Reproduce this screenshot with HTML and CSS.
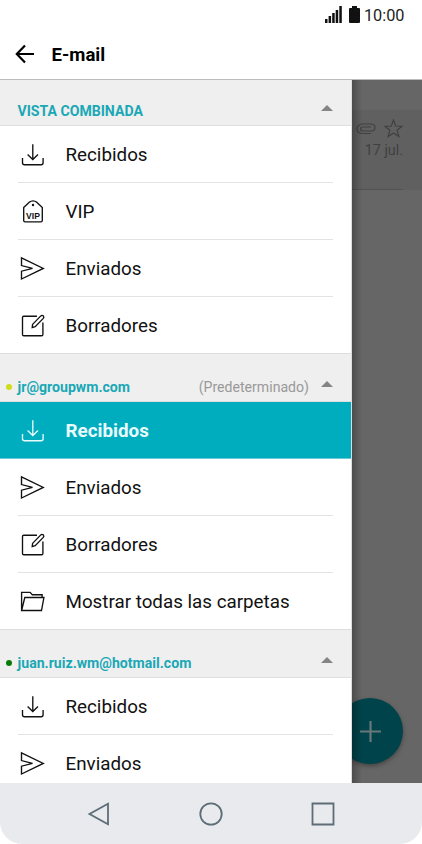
FILE: index.html
```html
<!DOCTYPE html>
<html lang="es">
<head>
<meta charset="utf-8">
<title>E-mail</title>
<link rel="stylesheet" href="styles.css">
</head>
<body>
<svg class="defs" width="0" height="0">
  <symbol id="inbox" viewBox="0 0 26 26"><path d="M2.500 17v4.700q0 2 2 2h16.600q2 0 2-2V17M12.800 3.200v15.300M7.600 13.500l5.200 5 5.200-5"/></symbol>
  <symbol id="send" viewBox="0 0 26 26"><path d="M1.500 2.900L23.300 13.400 1.500 24V16.200l11-2.800-11-2.800z"/></symbol>
  <symbol id="draft" viewBox="0 0 26 26"><path d="M17 4.200H3.700q-1.200 0-1.200 1.200v17q0 1.300 1.300 1.300h17.800q1.300 0 1.300-1.300V10.500M12.600 12.400l8.200-8.500q1.200-1 2.500 0 1.100 1.200 0 2.500l-8.100 8.200-3 .9z"/></symbol>
  <symbol id="folder" viewBox="0 0 26 26"><path d="M1.600 22V4.400h8.500l2.200 2.300h9.800v2.800M1.600 22.500L4.800 9.500h19.100l-2.400 13z"/></symbol>
</svg>
<div class="phone">
  <div class="status">
    <svg width="17" height="17" viewBox="0 0 17 17"><path d="M0 13h2.500v4H0zM3.600 10h2.500v7H3.600zM7.200 7h2.500v10H7.200zM10.700 4h2.500v13h-2.500zM14.300 0h2.500v17h-2.500z"/></svg>
    <svg class="battery" width="11" height="17" viewBox="0 0 11 17"><path d="M3 0h5v2h2q1 0 1 1v13q0 1-1 1H1q-1 0-1-1V3q0-1 1-1h2z"/></svg>
    <span>10:00</span>
  </div>
  <header class="appbar">
    <svg width="20" height="20" viewBox="0 0 20 20"><path d="M19 10H2M10 1.500L1.800 10l8.200 8.500"/></svg>
    <h1>E-mail</h1>
  </header>
  <main class="content">
    <nav class="drawer">
      <div class="section first"><b>VISTA COMBINADA</b><i class="caret"></i></div>
      <div class="row"><svg><use href="#inbox"/></svg><span>Recibidos</span></div>
      <div class="row"><svg viewBox="0 0 26 26"><path d="M3.700 9.500L9 4.400q4-3 8 0l5.300 5.100v13q0 1.300-1.300 1.300H5q-1.300 0-1.300-1.300z"/><circle class="dot-hole" cx="13" cy="7" r="1.200"/><text x="13" y="20.600">VIP</text></svg><span>VIP</span></div>
      <div class="row"><svg><use href="#send"/></svg><span>Enviados</span></div>
      <div class="row last"><svg><use href="#draft"/></svg><span>Borradores</span></div>
      <div class="section"><i class="dot lime"></i><b>jr@groupwm.com</b><em>(Predeterminado)</em><i class="caret"></i></div>
      <div class="row active"><svg><use href="#inbox"/></svg><span>Recibidos</span></div>
      <div class="row"><svg><use href="#send"/></svg><span>Enviados</span></div>
      <div class="row"><svg><use href="#draft"/></svg><span>Borradores</span></div>
      <div class="row last"><svg><use href="#folder"/></svg><span>Mostrar todas las carpetas</span></div>
      <div class="section"><i class="dot green"></i><b>juan.ruiz.wm@hotmail.com</b><i class="caret"></i></div>
      <div class="row"><svg><use href="#inbox"/></svg><span>Recibidos</span></div>
      <div class="row"><svg><use href="#send"/></svg><span>Enviados</span></div>
    </nav>
    <div class="behind">
      <div class="mail">
        <div class="marks">
          <svg width="20" height="12" viewBox="0 0 20 12"><path d="M15 10.500H6Q1 10 1 6t5-5h9q4 .3 4 3.700T15 8H7Q4.700 8 4.700 6T7 4h8"/></svg>
          <svg width="19" height="19" viewBox="0 0 19 19"><path d="M9.500 1l2.200 6 6.400.3-5 3.900 1.800 6.400-5.400-3.600-5.400 3.600 1.800-6.400-5-3.900 6.400-.3z"/></svg>
        </div>
        <span class="date">17 jul.</span>
      </div>
      <div class="fab"><svg width="21" height="21" viewBox="0 0 21 21"><path d="M10.500 0v21M0 10.500h21"/></svg></div>
      <div class="shade"></div>
    </div>
  </main>
  <footer class="navbar">
    <svg width="24" height="24" viewBox="0 0 24 24"><path d="M21 1.800v20.400L2.500 12z"/></svg>
    <svg width="24" height="24" viewBox="0 0 24 24"><circle cx="12" cy="12" r="10.700"/></svg>
    <svg width="24" height="24" viewBox="0 0 24 24"><path d="M1.500 1.500h21v21h-21z"/></svg>
  </footer>
</div>
</body>
</html>
```
FILE: styles.css
```css
* { box-sizing: border-box; }
body { margin: 0; background: #fff; font-family: Roboto, "Liberation Sans", sans-serif; color: #111; }
svg { fill: none; stroke: currentColor; flex: none; }
.defs { position: absolute; }
.phone { width: 422px; height: 844px; display: flex; flex-direction: column; overflow: hidden; }
.status { height: 30px; display: flex; justify-content: flex-end; align-items: center; padding: 0 17.5px 0 0; font-size: 16.3px; color: #222; }
.status svg { fill: #111; stroke: none; margin-top: -2px; }
.status .battery { margin: -2px 4px 0 7px; }
.appbar { height: 50px; display: flex; align-items: center; padding-left: 15px; gap: 16.5px; border-bottom: 1px solid #bcbcbc; color: #000; }
.appbar svg { stroke-width: 2.2; margin-top: -1px; }
.appbar h1 { margin: 0; font-size: 18.6px; font-weight: 700; }
.content { height: 703px; display: flex; overflow: hidden; }
.drawer { width: 352px; background: #fff; overflow: hidden; border-right: 1px solid #ddd; }
.section { height: 49px; background: #efefef; border-top: 1px solid #dedede; border-bottom: 1px solid #dedede; display: flex; align-items: center; padding: 19px 18px 0 5.6px; color: #1aa8b6; font-size: 14.1px; }
.section.first { height: 46px; border-top: 0; padding: 16px 18px 0 17.5px; }
.section em { margin-left: auto; color: #999; font-style: normal; }
.section .caret { margin: -6px 0 0 auto; border: 6px solid transparent; border-top: 0; border-bottom-color: #858585; }
.section em + .caret { margin-left: 12px; }
.dot { width: 6px; height: 6px; border-radius: 50%; margin-right: 6px; }
.lime { background: #d0dc18; }
.green { background: #087a08; }
.row { height: 57px; display: flex; align-items: center; padding: 1px 0 0 20px; font-size: 18.8px; color: #111; background: linear-gradient(#e3e3e3, #e3e3e3) 18px 100% / 315px 1px no-repeat; }
.row.last { height: 56px; background: none; }
.row svg { width: 26px; height: 26px; margin: -2px 19.5px 0 0; stroke-width: 1.350; }
.row text { font: 700 8.600px "Liberation Sans", sans-serif; text-anchor: middle; fill: currentColor; stroke: none; }
.dot-hole { fill: currentColor; stroke: none; }
.row.active { background: linear-gradient(#66cbd5, #66cbd5) 0 100% / 100% 1px no-repeat #00adbe; color: #e9fbfc; font-weight: 700; }
.behind { position: relative; flex: 1; background: #666; display: flex; flex-direction: column; justify-content: space-between; padding-top: 30px; }
.mail { height: 80px; background: linear-gradient(#525252, #525252) 0 100% / 51px 1px no-repeat #606060; color: #404040; padding: 8px 19px 0 4px; text-align: right; }
.marks { display: flex; justify-content: space-between; align-items: center; height: 21px; stroke-width: 1.2; }
.date { display: block; font-size: 14.3px; line-height: 22px; }
.fab { width: 66px; height: 66px; margin: 0 0 19px -15px; border-radius: 50%; background: #00434a; color: #68797b; display: flex; align-items: center; justify-content: center; box-shadow: 0 2px 4px #444; clip-path: inset(-10px -10px -10px 15px); }
.fab svg { stroke-width: 2.2; margin-left: 1px; }
.shade { position: absolute; inset: 0 auto 0 0; width: 10px; background: linear-gradient(90deg, rgba(0,0,0,.25), transparent); }
.navbar { height: 61px; background: #e8eaee; border-radius: 0 0 22px 22px; display: flex; justify-content: space-between; padding: 18.5px 87.5px 0 87.500px; color: #5d6d76; }
.navbar svg { stroke-width: 1.800; margin-left: -.5px; }
```
